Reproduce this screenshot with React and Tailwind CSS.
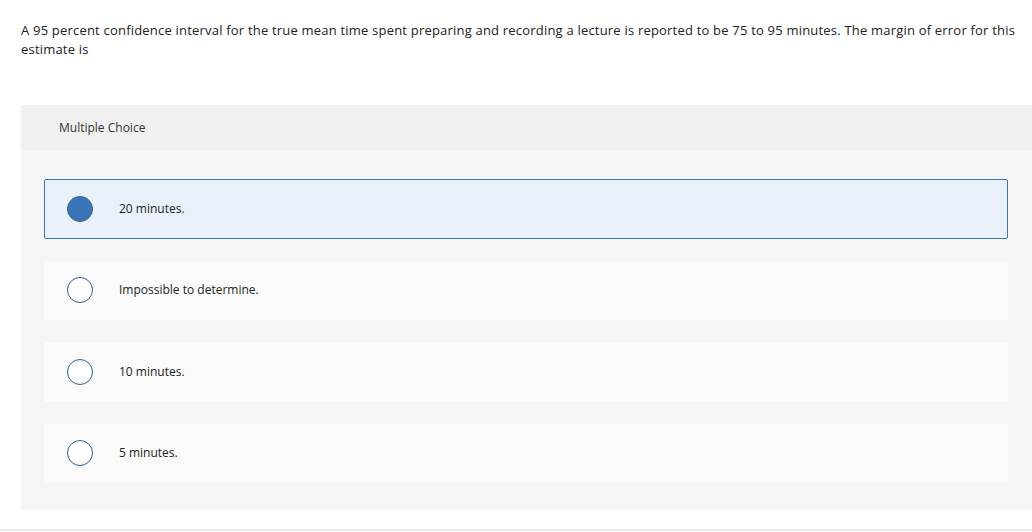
import React from "react";

const options = [
  { text: "20 minutes.", selected: true },
  { text: "Impossible to determine.", selected: false },
  { text: "10 minutes.", selected: false },
  { text: "5 minutes.", selected: false },
];

export default function App() {
  return (
    <div
      className="w-[1032px] h-[532px] bg-white text-[#1c1c1c] overflow-hidden flex flex-col"
      style={{ fontFamily: "'Open Sans', Lato, sans-serif" }}
    >
      <div className="pl-[21px] pr-[10px] pt-[21px] text-[13px] leading-[19px] tracking-[0.2px] text-[#222]">
        A 95 percent confidence interval for the true mean time spent preparing and recording a lecture is reported to be 75 to 95 minutes. The margin of error for this estimate is
      </div>
      <div className="ml-[21px] mt-[46px] flex flex-col">
        <div className="h-[45px] bg-[#f0f0f0] flex items-center pl-[38px] text-[12px] text-[#333]">
          Multiple Choice
        </div>
        <div className="bg-[#f5f5f5] pl-[23px] pr-[24px] pt-[29px] pb-[27px] flex flex-col gap-[22px]">
          {options.map((o, i) => (
            <div
              key={i}
              className={
                "h-[59.5px] rounded-[2px] flex items-center pl-[22px] " +
                (o.selected
                  ? "bg-[#eaf1fa] border border-[#3a76bb]"
                  : "bg-[#fafafa] border border-[#fafafa]")
              }
            >
              <div
                className={
                  "w-[26px] h-[26px] rounded-full shrink-0 " +
                  (o.selected
                    ? "bg-[#3a74b8] border border-[#2f62a0]"
                    : "bg-white border-[1.5px] border-[#2c5c94]")
                }
              />
              <span className="ml-[26px] text-[12px] text-[#222]">{o.text}</span>
            </div>
          ))}
        </div>
      </div>
      <div className="mt-auto mb-[1px] h-[2px] bg-[#ececec]" />
    </div>
  );
}
